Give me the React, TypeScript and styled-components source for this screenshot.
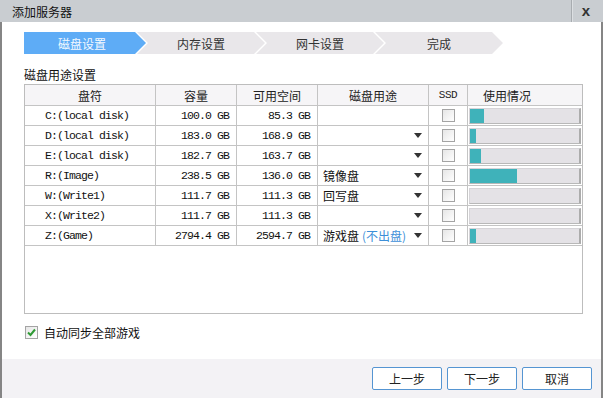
import React from "react";
import styled, { createGlobalStyle } from "styled-components";

const GlobalStyle = createGlobalStyle`
  html, body { margin: 0; padding: 0; background: #ffffff; }
  body { font-family: "Noto Sans CJK SC", "Noto Sans", sans-serif; }
`;

const cjk = `"Noto Sans CJK SC", "Noto Sans", sans-serif`;
const mono = `"Liberation Mono", "Noto Sans CJK SC", monospace`;

type Disk = {
  name: string;
  size: string;
  free: string;
  use: string;
  note?: string;
  arrow: boolean;
  used: number;
};

const disks: Disk[] = [
  { name: "C:(local disk)", size: "100.0 GB", free: "85.3 GB", use: "", arrow: false, used: 14 },
  { name: "D:(local disk)", size: "183.0 GB", free: "168.9 GB", use: "", arrow: true, used: 6 },
  { name: "E:(local disk)", size: "182.7 GB", free: "163.7 GB", use: "", arrow: true, used: 11 },
  { name: "R:(Image)", size: "238.5 GB", free: "136.0 GB", use: "镜像盘", arrow: true, used: 47 },
  { name: "W:(Write1)", size: "111.7 GB", free: "111.3 GB", use: "回写盘", arrow: true, used: 0 },
  { name: "X:(Write2)", size: "111.7 GB", free: "111.3 GB", use: "", arrow: true, used: 0 },
  { name: "Z:(Game)", size: "2794.4 GB", free: "2594.7 GB", use: "游戏盘", note: "(不出盘)", arrow: true, used: 6 },
];

const steps = ["磁盘设置", "内存设置", "网卡设置", "完成"];

function App() {
  return (
    <>
      <GlobalStyle />
      <Dialog>
        <TitleBar>
          <Title>添加服务器</Title>
          <CloseBox>x</CloseBox>
        </TitleBar>
        <Body>
          <Steps>
            {steps.map((s, i) => (
              <Step key={s} $first={i === 0} $active={i === 0}>
                {s}
              </Step>
            ))}
          </Steps>
          <SectionLabel>磁盘用途设置</SectionLabel>
          <TableBox>
            <HeadRow>
              <HeadCell>盘符</HeadCell>
              <HeadCell>容量</HeadCell>
              <HeadCell>可用空间</HeadCell>
              <HeadCell>磁盘用途</HeadCell>
              <HeadCell $mono>SSD</HeadCell>
              <HeadCell $last>使用情况</HeadCell>
            </HeadRow>
            {disks.map((d) => (
              <Row key={d.name}>
                <NameCell>{d.name}</NameCell>
                <NumCell>{d.size}</NumCell>
                <NumCell>{d.free}</NumCell>
                <UseCell>
                  <span>
                    {d.use}
                    {d.note && <Note>{d.note}</Note>}
                  </span>
                  {d.arrow && <Caret />}
                </UseCell>
                <CheckCell>
                  <Box />
                </CheckCell>
                <BarCell>
                  <Bar>
                    <Fill style={{ width: d.used }} />
                  </Bar>
                </BarCell>
              </Row>
            ))}
          </TableBox>
          <SyncRow>
            <Box $checked>
              <svg width="11" height="11" viewBox="0 0 11 11">
                <path d="M2 5.5 L4.5 8 L9 2.5" stroke="#2f9a35" strokeWidth="2" fill="none" />
              </svg>
            </Box>
            <span>自动同步全部游戏</span>
          </SyncRow>
        </Body>
        <Footer>
          <Button>上一步</Button>
          <Button>下一步</Button>
          <Button>取消</Button>
        </Footer>
      </Dialog>
    </>
  );
}

const Dialog = styled.div`
  width: 603px;
  height: 398px;
  display: flex;
  flex-direction: column;
  background: #ffffff;
  overflow: hidden;
`;

const TitleBar = styled.div`
  height: 22px;
  flex: none;
  display: flex;
  align-items: center;
  background: #c9cdd1;
`;

const Title = styled.div`
  flex: 1;
  padding-left: 12px;
  font-family: ${cjk};
  font-size: 12px;
  color: #111;
`;

const CloseBox = styled.div`
  width: 32px;
  height: 22px;
  border-left: 1px solid #a8acb0;
  box-shadow: inset 1px 0 0 #dcdfe2;
  display: flex;
  align-items: center;
  justify-content: center;
  font-family: "Liberation Sans", sans-serif;
  font-weight: bold;
  font-size: 15px;
  color: #333;
  padding: 0 3px 2px 0;
  box-sizing: border-box;
`;

const Body = styled.div`
  flex: 1;
  border-left: 2px solid #858585;
  border-right: 2px solid #858585;
  padding: 10px 0 0 22px;
  display: flex;
  flex-direction: column;
`;

const Steps = styled.div`
  display: flex;
  height: 22px;
`;

const Step = styled.div<{ $first: boolean; $active: boolean }>`
  width: ${(p) => (p.$first ? 122 : 128)}px;
  margin-left: ${(p) => (p.$first ? 0 : -9)}px;
  height: 22px;
  box-sizing: border-box;
  padding: 0 11px 0 ${(p) => (p.$first ? 5 : 11)}px;
  display: flex;
  align-items: center;
  justify-content: center;
  background: ${(p) => (p.$active ? "#5eacf6" : "#e9e7ea")};
  color: ${(p) => (p.$active ? "#f4f9ff" : "#333")};
  font-family: ${cjk};
  font-size: 12px;
  clip-path: ${(p) =>
    p.$first
      ? "polygon(0 0, calc(100% - 11px) 0, 100% 50%, calc(100% - 11px) 100%, 0 100%)"
      : "polygon(0 0, calc(100% - 11px) 0, 100% 50%, calc(100% - 11px) 100%, 0 100%, 11px 50%)"};
`;

const SectionLabel = styled.div`
  margin-top: 12px;
  height: 18px;
  line-height: 18px;
  font-family: ${cjk};
  font-size: 12px;
  color: #111;
`;

const TableBox = styled.div`
  width: 559px;
  height: 230px;
  box-sizing: border-box;
  border: 1px solid #bdbdbd;
`;

const cols = "131px 81px 81px 111px 39px 1fr";

const HeadRow = styled.div`
  display: grid;
  grid-template-columns: ${cols};
  height: 21px;
  box-sizing: border-box;
  border-bottom: 1px solid #c4c4c4;
  background: #f6f5f7;
`;

const HeadCell = styled.div<{ $mono?: boolean; $last?: boolean }>`
  border-right: ${(p) => (p.$last ? "none" : "1px solid #c4c4c4")};
  display: flex;
  align-items: center;
  justify-content: ${(p) => (p.$last ? "flex-start" : "center")};
  padding-left: ${(p) => (p.$last ? "15px" : "0")};
  font-family: ${(p) => (p.$mono ? mono : cjk)};
  font-size: ${(p) => (p.$mono ? "11px" : "12px")};
  letter-spacing: ${(p) => (p.$mono ? "-0.5px" : "0")};
  color: #222;
`;

const Row = styled.div`
  display: grid;
  grid-template-columns: ${cols};
  height: 20px;
  box-sizing: border-box;
  border-bottom: 1px solid #c4c4c4;
`;

const Cell = styled.div`
  border-right: 1px solid #c4c4c4;
  display: flex;
  align-items: center;
  font-family: ${mono};
  font-size: 11.5px;
  letter-spacing: -0.9px;
  color: #111;
  white-space: nowrap;
  overflow: hidden;
`;

const NameCell = styled(Cell)`
  padding-left: 20px;
`;

const NumCell = styled(Cell)`
  justify-content: flex-end;
  padding-right: 7px;
`;

const UseCell = styled(Cell)`
  justify-content: space-between;
  padding: 0 6px 0 5px;
  font-family: ${cjk};
  font-size: 12px;
  letter-spacing: 0;
`;

const Note = styled.span`
  color: #3d8fd8;
  margin-left: 3px;
`;

const Caret = styled.span`
  width: 0;
  height: 0;
  border-left: 4.5px solid transparent;
  border-right: 4.5px solid transparent;
  border-top: 5px solid #333;
`;

const CheckCell = styled(Cell)`
  justify-content: center;
`;

const Box = styled.span<{ $checked?: boolean }>`
  width: 13px;
  height: 13px;
  box-sizing: border-box;
  border: 1px solid #a4a4a4;
  background: linear-gradient(135deg, #e6e6e6, #ffffff);
  display: inline-flex;
  align-items: center;
  justify-content: center;
  flex: none;
`;

const BarCell = styled.div`
  display: flex;
  align-items: center;
  padding-left: 1px;
`;

const Bar = styled.div`
  width: 112px;
  height: 16px;
  box-sizing: border-box;
  background: #e4e2e6;
  border-top: 1px solid #d6d4d8;
  border-left: 1px solid #d6d4d8;
  border-right: 2px solid #acacac;
  border-bottom: 1px solid #b8b8b8;
`;

const Fill = styled.div`
  height: 100%;
  background: #3fb2ba;
`;

const SyncRow = styled.div`
  margin-top: 10px;
  margin-left: 1px;
  height: 16px;
  display: flex;
  align-items: center;
  gap: 6px;
  font-family: ${cjk};
  font-size: 12px;
  color: #111;
`;

const Footer = styled.div`
  height: 39px;
  flex: none;
  box-sizing: border-box;
  border-left: 2px solid #858585;
  border-right: 2px solid #858585;
  background: #f3f2f5;
  display: flex;
  justify-content: flex-end;
  gap: 5px;
  padding: 8px 9px 0 0;
`;

const Button = styled.button`
  width: 70px;
  height: 23px;
  box-sizing: border-box;
  border: 1px solid #5595d2;
  border-radius: 2px;
  background: #ffffff;
  font-family: ${cjk};
  font-size: 12px;
  color: #222;
  padding: 0;
`;

export default App;
